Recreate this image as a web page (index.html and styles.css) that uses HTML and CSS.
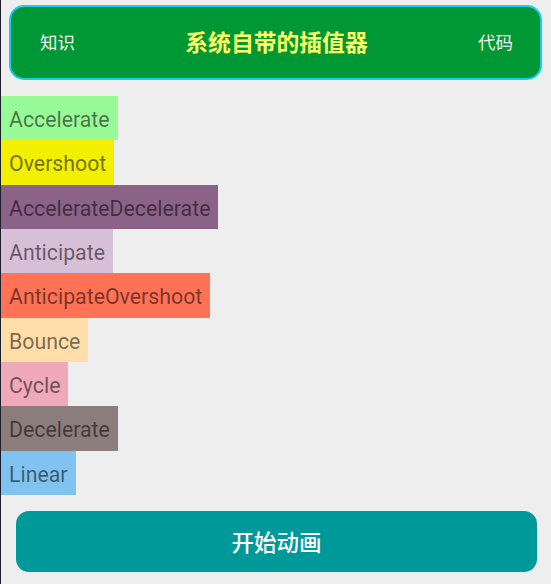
FILE: index.html
```html
<!DOCTYPE html>
<html>
<head>
<meta charset="utf-8">
<link rel="stylesheet" href="styles.css">
</head>
<body>
<div class="page">
  <header class="bar">
    <span class="side">知识</span>
    <span class="title">系统自带的插值器</span>
    <span class="side">代码</span>
  </header>
  <ul class="list">
    <li class="item c1">Accelerate</li>
    <li class="item c2">Overshoot</li>
    <li class="item c3">AccelerateDecelerate</li>
    <li class="item c4">Anticipate</li>
    <li class="item c5">AnticipateOvershoot</li>
    <li class="item c6">Bounce</li>
    <li class="item c7">Cycle</li>
    <li class="item c8">Decelerate</li>
    <li class="item c9">Linear</li>
  </ul>
  <div class="actions">
    <button class="start">开始动画</button>
  </div>
</div>
</body>
</html>
```
FILE: styles.css
```css
html, body {
  margin: 0;
  padding: 0;
  height: 100%;
  background: #eeeeee;
}
body {
  font-family: Roboto, "Noto Sans CJK SC", sans-serif;
}
.page {
  min-height: 100%;
  box-sizing: border-box;
  border-left: 1px solid #1e1d2a;
  padding-top: 5px;
}
.bar {
  margin: 0 9px 0 8px;
  height: 75px;
  box-sizing: border-box;
  border: 2px solid #18cdf5;
  border-radius: 15px;
  background: #009834;
  display: flex;
  align-items: center;
  justify-content: space-between;
  padding: 0 27px 2px 29px;
}
.side {
  font-family: "Noto Sans CJK SC", sans-serif;
  font-size: 17.5px;
  color: #f2f2f2;
}
.title {
  font-family: "Noto Sans CJK SC", sans-serif;
  font-size: 22.8px;
  font-weight: bold;
  color: #ffff66;
}
.list {
  list-style: none;
  margin: 16px 0 0 0;
  padding: 0;
  display: flex;
  flex-direction: column;
  align-items: flex-start;
}
.item {
  box-sizing: border-box;
  height: 44.33px;
  line-height: 41.33px;
  padding: 3px 8px 0;
  font-size: 21.3px;
  color: rgba(0, 0, 0, 0.54);
}
.c1 { background: #98fb98; }
.c2 { background: #f2f000; }
.c3 { background: #8b6389; }
.c4 { background: #d8bfd8; }
.c5 { background: #ff7256; }
.c6 { background: #ffdeaa; }
.c7 { background: #efa9b8; }
.c8 { background: #8b7d7b; }
.c9 { background: #80c2f0; }
.actions {
  padding: 16px 14px 0 15px;
}
.start {
  display: block;
  width: 100%;
  height: 61px;
  border: none;
  border-radius: 13px;
  background: #009999;
  color: #ffffff;
  font-family: "Noto Sans CJK SC", sans-serif;
  font-size: 22.5px;
  font-weight: 500;
}
```
